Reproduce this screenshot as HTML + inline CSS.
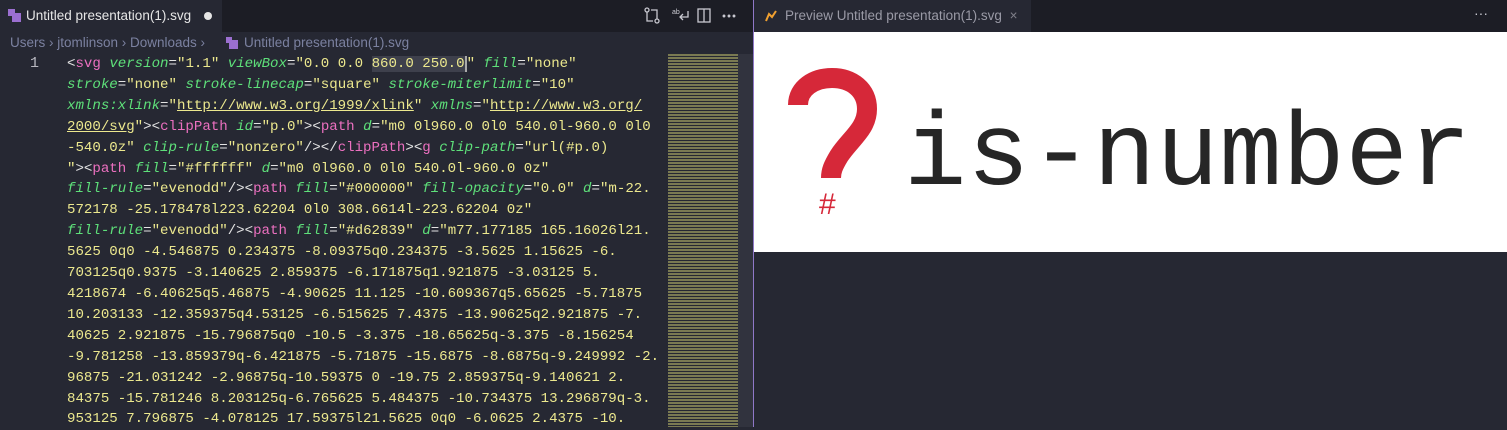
<!DOCTYPE html>
<html><head><meta charset="utf-8"><style>
*{margin:0;padding:0;box-sizing:border-box}
body{width:1507px;height:427px;overflow:hidden;background:#262833;font-family:"Liberation Sans",sans-serif;position:relative}
.abs{position:absolute}
#tabbar{left:0;top:0;width:753px;height:32px;background:#1c1d25}
#tab1{left:0;top:0;width:222px;height:32px;background:#262833;color:#e6e6e6;font-size:13.5px;line-height:31px;padding-left:26px}
#bc{left:0;top:32px;width:753px;height:22px;color:#7b81a0;font-size:13.5px;line-height:22px;padding-left:10px;background:#262833}
#code{left:0;top:54px;width:668px;height:373px;font-family:"Liberation Mono",monospace;font-size:14.1px;line-height:20.9px;color:#ece88e;white-space:pre}
.ln{position:absolute;left:30px;top:0;color:#b8b8c0;font-size:15px}
.lines{position:absolute;left:67px;top:0}
.t{color:#ec70c0}.a{color:#5ee07a;font-style:italic}.p{color:#e4e4e4}.u{text-decoration:underline}
#mini{left:668px;top:54px;width:70px;height:373px;background:repeating-linear-gradient(#7a7a52 0 2px,transparent 2px 3px)}
#sb{left:738px;top:54px;width:15px;height:373px;background:#31333e}
#div{left:753px;top:0;width:1px;height:427px;background:#8f78c8}
#rtab{left:754px;top:0;width:753px;height:32px;background:#1c1d25}
#tab2{left:754px;top:0;width:277px;height:32px;background:#262833;color:#9a9aa6;font-size:13.5px;line-height:31px;padding-left:31px}
#prev{left:754px;top:32px;width:753px;height:220px;background:#fff}
</style></head><body>
<div class="abs" id="tabbar"></div>
<div class="abs" id="tab1">Untitled presentation(1).svg</div>
<svg class="abs" style="left:8px;top:9px" width="14" height="14"><rect x="0" y="0" width="7" height="7" fill="#9b6fd0"/><rect x="4" y="4" width="9" height="9" fill="#9b6fd0"/></svg>
<div class="abs" style="left:204px;top:12px;width:8px;height:8px;border-radius:50%;background:#e6e6e6"></div>
<svg class="abs" style="left:644px;top:7px" width="100" height="18" fill="none" stroke="#c8c8d0" stroke-width="1.3">
<circle cx="3" cy="3" r="2"/><circle cx="13" cy="14" r="2"/><path d="M3 5v9h6M13 12V3H7"/>
<text x="28" y="7" font-size="7" fill="#c8c8d0" stroke="none">ab</text><path d="M36 10h8v-6M39 7l-3 3 3 3"/>
<rect x="54" y="2" width="12" height="13"/><path d="M60 2v13"/>
<circle cx="80" cy="9" r=".8" fill="#c8c8d0"/><circle cx="85" cy="9" r=".8" fill="#c8c8d0"/><circle cx="90" cy="9" r=".8" fill="#c8c8d0"/>
</svg>
<div class="abs" id="bc">Users › jtomlinson › Downloads ›</div>
<div class="abs" style="left:244px;top:32px;color:#7b81a0;font-size:13.5px;line-height:22px">Untitled presentation(1).svg</div>
<svg class="abs" style="left:226px;top:37px" width="14" height="14"><rect x="0" y="0" width="6" height="6" fill="#9b6fd0"/><rect x="3" y="3" width="9" height="9" fill="#9b6fd0"/></svg>
<div class="abs" id="code"><div class="ln">1</div><div class="lines"><span class="p">&lt;</span><span class="t">svg</span> <span class="a">version</span><span class="p">=</span>"1.1" <span class="a">viewBox</span><span class="p">=</span>"0.0 0.0 <span style="background:#3e404c">860.0 250.0</span><span style="border-left:2px solid #aaa"></span>" <span class="a">fill</span><span class="p">=</span>"none"
<span class="a">stroke</span><span class="p">=</span>"none" <span class="a">stroke-linecap</span><span class="p">=</span>"square" <span class="a">stroke-miterlimit</span><span class="p">=</span>"10"
<span class="a">xmlns:xlink</span><span class="p">=</span>"<span class="u">http://www.w3.org/1999/xlink</span>" <span class="a">xmlns</span><span class="p">=</span>"<span class="u">http://www.w3.org/</span>
<span class="u">2000/svg</span>"<span class="p">&gt;&lt;</span><span class="t">clipPath</span> <span class="a">id</span><span class="p">=</span>"p.0"<span class="p">&gt;&lt;</span><span class="t">path</span> <span class="a">d</span><span class="p">=</span>"m0 0l960.0 0l0 540.0l-960.0 0l0
-540.0z" <span class="a">clip-rule</span><span class="p">=</span>"nonzero"<span class="p">/&gt;&lt;/</span><span class="t">clipPath</span><span class="p">&gt;&lt;</span><span class="t">g</span> <span class="a">clip-path</span><span class="p">=</span>"url(#p.0)
"<span class="p">&gt;&lt;</span><span class="t">path</span> <span class="a">fill</span><span class="p">=</span>"#ffffff" <span class="a">d</span><span class="p">=</span>"m0 0l960.0 0l0 540.0l-960.0 0z"
<span class="a">fill-rule</span><span class="p">=</span>"evenodd"<span class="p">/&gt;&lt;</span><span class="t">path</span> <span class="a">fill</span><span class="p">=</span>"#000000" <span class="a">fill-opacity</span><span class="p">=</span>"0.0" <span class="a">d</span><span class="p">=</span>"m-22.
572178 -25.178478l223.62204 0l0 308.6614l-223.62204 0z"
<span class="a">fill-rule</span><span class="p">=</span>"evenodd"<span class="p">/&gt;&lt;</span><span class="t">path</span> <span class="a">fill</span><span class="p">=</span>"#d62839" <span class="a">d</span><span class="p">=</span>"m77.177185 165.16026l21.
5625 0q0 -4.546875 0.234375 -8.09375q0.234375 -3.5625 1.15625 -6.
703125q0.9375 -3.140625 2.859375 -6.171875q1.921875 -3.03125 5.
4218674 -6.40625q5.46875 -4.90625 11.125 -10.609367q5.65625 -5.71875
10.203133 -12.359375q4.53125 -6.515625 7.4375 -13.90625q2.921875 -7.
40625 2.921875 -15.796875q0 -10.5 -3.375 -18.65625q-3.375 -8.156254
-9.781258 -13.859379q-6.421875 -5.71875 -15.6875 -8.6875q-9.249992 -2.
96875 -21.031242 -2.96875q-10.59375 0 -19.75 2.859375q-9.140621 2.
84375 -15.781246 8.203125q-6.765625 5.484375 -10.734375 13.296879q-3.
953125 7.796875 -4.078125 17.59375l21.5625 0q0 -6.0625 2.4375 -10.</div></div>
<div class="abs" id="mini"></div>
<div class="abs" id="sb"></div>
<div class="abs" id="rtab"></div>
<div class="abs" id="tab2">Preview Untitled presentation(1).svg <span style="color:#80808a;margin-left:4px">×</span></div>
<svg class="abs" style="left:764px;top:9px" width="14" height="14"><path d="M2 12l3-7 3 3 4-6" stroke="#f0a030" stroke-width="2" fill="none"/></svg>
<div class="abs" style="left:1474px;top:5px;color:#c8c8d0;font-size:14px">···</div>
<div class="abs" id="div"></div>
<div class="abs" id="prev"></div>
<svg class="abs" style="left:754px;top:32px" width="753" height="220">
<path d="M44 73C44 56 60 46 78 46C98 46 113 58 113 77C113 97 96 107 85 124C79 134 77 139 77 146" stroke="#d62839" stroke-width="20" fill="none"/>
<text x="65" y="182" font-family="Liberation Sans,sans-serif" font-size="30" fill="#d62839">#</text>
<text x="150" y="152" font-family="Liberation Mono,monospace" font-size="104" fill="#262626" textLength="567" lengthAdjust="spacing">is-number</text>
</svg>
</body></html>
